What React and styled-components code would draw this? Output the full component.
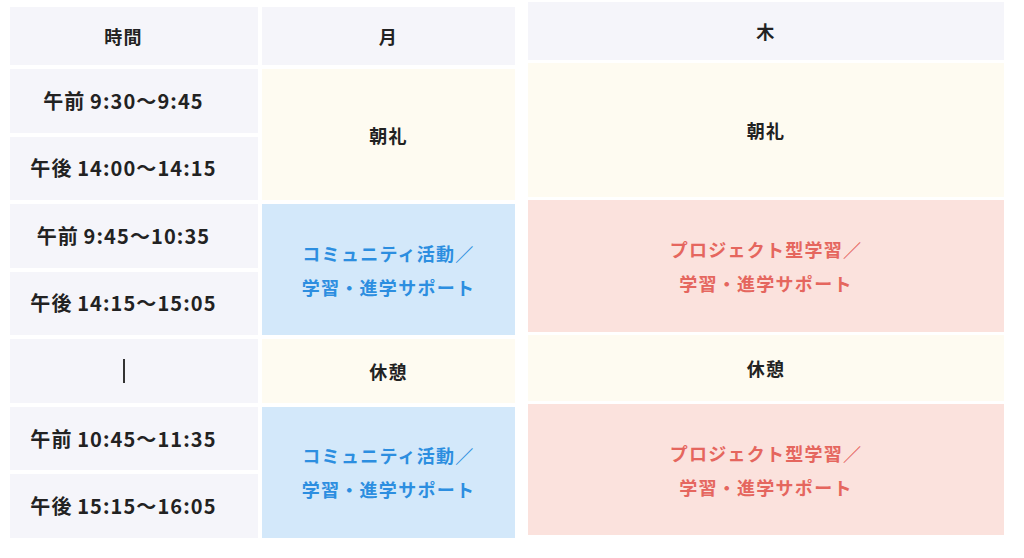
import styled, { createGlobalStyle } from "styled-components";

const GlobalStyle = createGlobalStyle`
  html, body {
    margin: 0;
    padding: 0;
    background: #ffffff;
  }
  body {
    font-family: "Noto Sans CJK JP", "Noto Sans", sans-serif;
    color: #222222;
  }
`;

const tones = {
  head: { bg: "#f5f5fa", fg: "#222222" },
  time: { bg: "#f5f5fa", fg: "#222222" },
  cream: { bg: "#fefbf1", fg: "#222222" },
  blue: { bg: "#d3e8fa", fg: "#2c8ee0" },
  pink: { bg: "#fbe2dd", fg: "#e5665e" },
};

const Page = styled.div`
  display: flex;
  align-items: flex-start;
  gap: 13px;
  padding: 2px 19px 0 10px;
  width: 1024px;
  height: 558px;
  box-sizing: border-box;
`;

const LeftTable = styled.div`
  display: grid;
  grid-template-columns: 248px 253px;
  grid-template-rows: 58px repeat(7, 1fr);
  gap: 4px;
  height: 531px;
  margin-top: 5px;
`;

const RightTable = styled.div`
  display: grid;
  grid-template-columns: 476px;
  grid-template-rows: 58px 134px 132px 66px 131px;
  gap: 3px;
`;

const Cell = styled.div`
  display: flex;
  align-items: center;
  justify-content: center;
  text-align: center;
  box-sizing: border-box;
  padding-right: ${(p) => (p.$shift ? "21px" : "0")};
  grid-row: ${(p) => (p.$span ? `span ${p.$span}` : "auto")};
  background: ${(p) => tones[p.$tone].bg};
  color: ${(p) => tones[p.$tone].fg};
  font-size: 18px;
  font-weight: 700;
  line-height: 34px;
  letter-spacing: 0.07em;
`;

const TimeText = styled.span`
  font-size: 20px;
  letter-spacing: 0.055em;
  word-spacing: -1px;
  white-space: nowrap;
`;

const Bar = styled.span`
  display: block;
  width: 2px;
  height: 24px;
  background: #333333;
`;

const TimeCell = ({ children }) => (
  <Cell $tone="time" $shift>
    <TimeText>{children}</TimeText>
  </Cell>
);

const Activity = ({ tone, first, second, span }) => (
  <Cell $tone={tone} $span={span}>
    <div>
      {first}
      <br />
      {second}
    </div>
  </Cell>
);

export default function App() {
  return (
    <>
      <GlobalStyle />
      <Page>
        <LeftTable>
          <Cell $tone="head" $shift>時間</Cell>
          <Cell $tone="head">月</Cell>

          <TimeCell>午前 9:30〜9:45</TimeCell>
          <Cell $tone="cream" $span={2}>朝礼</Cell>
          <TimeCell>午後 14:00〜14:15</TimeCell>

          <TimeCell>午前 9:45〜10:35</TimeCell>
          <Activity tone="blue" span={2} first="コミュニティ活動／" second="学習・進学サポート" />
          <TimeCell>午後 14:15〜15:05</TimeCell>

          <Cell $tone="time" $shift>
            <Bar />
          </Cell>
          <Cell $tone="cream">休憩</Cell>

          <TimeCell>午前 10:45〜11:35</TimeCell>
          <Activity tone="blue" span={2} first="コミュニティ活動／" second="学習・進学サポート" />
          <TimeCell>午後 15:15〜16:05</TimeCell>
        </LeftTable>

        <RightTable>
          <Cell $tone="head">木</Cell>
          <Cell $tone="cream">朝礼</Cell>
          <Activity tone="pink" first="プロジェクト型学習／" second="学習・進学サポート" />
          <Cell $tone="cream">休憩</Cell>
          <Activity tone="pink" first="プロジェクト型学習／" second="学習・進学サポート" />
        </RightTable>
      </Page>
    </>
  );
}
